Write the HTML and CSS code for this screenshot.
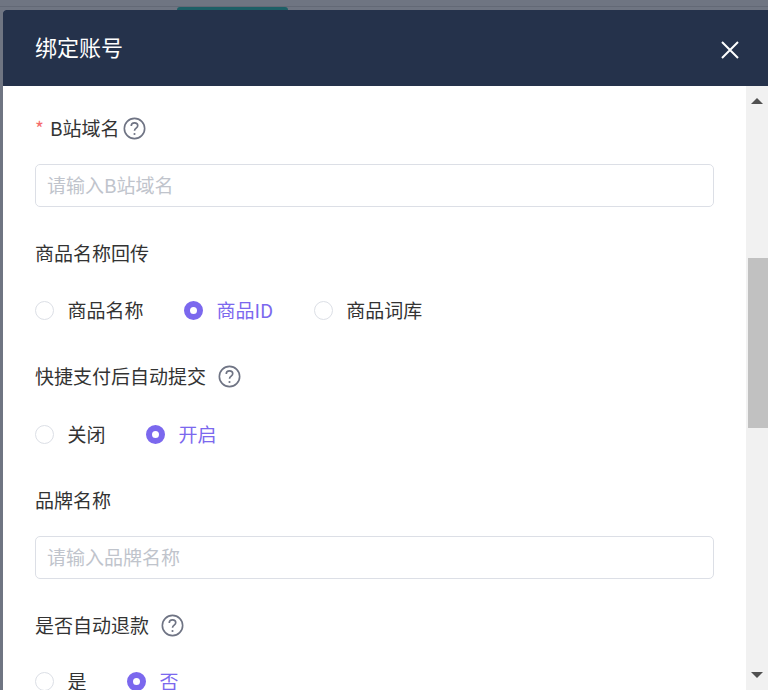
FILE: index.html
```html
<!DOCTYPE html>
<html lang="zh-CN">
<head>
<meta charset="utf-8">
<title>绑定账号</title>
<link rel="stylesheet" href="styles.css">
</head>
<body>
<div class="backdrop">
  <div class="page-line"></div>
  <div class="page-tab"></div>
  <section class="modal">
    <header class="modal-head">
      <h2 class="modal-title">绑定账号</h2>
      <svg class="close" width="20" height="20" viewBox="0 0 20 20"><path d="M2 2 18 18M18 2 2 18"/></svg>
    </header>
    <div class="modal-body">
      <form class="form">
        <div class="label-row"><span class="req">*</span><span>B站域名</span>
          <svg class="help help-tight" viewBox="0 0 24 24"><circle cx="12" cy="12" r="10.6"/><path d="M8.6 9.3c0-2 1.5-3.2 3.4-3.2s3.4 1.2 3.4 2.9c0 2.500-3.400 2.600-3.400 5.300"/><circle class="dot" cx="12" cy="17.700" r="1.100"/></svg>
        </div>
        <div class="input">请输入B站域名</div>

        <div class="label-row"><span>商品名称回传</span></div>
        <div class="radios">
          <span class="radio"><i class="dot-off"></i>商品名称</span>
          <span class="radio on"><i class="dot-on"></i>商品ID</span>
          <span class="radio"><i class="dot-off"></i>商品词库</span>
        </div>

        <div class="label-row label-wide"><span>快捷支付后自动提交</span>
          <svg class="help" viewBox="0 0 24 24"><circle cx="12" cy="12" r="10.6"/><path d="M8.6 9.3c0-2 1.5-3.2 3.4-3.2s3.4 1.2 3.4 2.9c0 2.500-3.400 2.600-3.400 5.300"/><circle class="dot" cx="12" cy="17.700" r="1.100"/></svg>
        </div>
        <div class="radios">
          <span class="radio"><i class="dot-off"></i>关闭</span>
          <span class="radio on"><i class="dot-on"></i>开启</span>
        </div>

        <div class="label-row"><span>品牌名称</span></div>
        <div class="input">请输入品牌名称</div>

        <div class="label-row label-narrow"><span>是否自动退款</span>
          <svg class="help" viewBox="0 0 24 24"><circle cx="12" cy="12" r="10.6"/><path d="M8.6 9.3c0-2 1.5-3.2 3.4-3.2s3.4 1.2 3.4 2.9c0 2.500-3.400 2.600-3.400 5.300"/><circle class="dot" cx="12" cy="17.700" r="1.100"/></svg>
        </div>
        <div class="radios">
          <span class="radio"><i class="dot-off"></i>是</span>
          <span class="radio on"><i class="dot-on"></i>否</span>
        </div>
      </form>
      <div class="scrollbar">
        <svg class="arrow" width="22" height="24" viewBox="0 0 22 24"><path d="M5 18 11 12 17 18Z"/></svg>
        <div class="track"><div class="thumb"></div></div>
        <svg class="arrow" width="22" height="24" viewBox="0 0 22 24"><path d="M5 6 11 12 17 6Z"/></svg>
      </div>
    </div>
  </section>
</div>
</body>
</html>
```
FILE: styles.css
```css
* { box-sizing: border-box; }
html, body { margin: 0; height: 100%; overflow: hidden; }
body { font-family: "Noto Sans CJK SC", "Noto Sans", sans-serif; color: #333; }
.backdrop {
  position: relative;
  height: 690px;
  background: #6f7582;
  padding: 10px 0 0 3px;
}
.page-line {
  position: absolute;
  left: 0; right: 0; top: 6px;
  height: 1px;
  background: #636976;
}
.page-tab {
  position: absolute;
  left: 177px; top: 7px;
  width: 111px; height: 3px;
  background: #1d5f66;
  border-radius: 3px 3px 0 0;
}
.modal {
  position: relative;
  height: 680px;
  display: flex;
  flex-direction: column;
  background: #fff;
  border-radius: 3px 0 0 0;
  overflow: hidden;
}
.modal-head {
  flex: none;
  height: 76px;
  background: #25324b;
  display: flex;
  align-items: center;
  justify-content: space-between;
  padding: 0 28px 0 32px;
}
.modal-title { margin: 0; font-size: 22px; font-weight: 400; color: #fff; line-height: 72px; height: 76px; }
.close { fill: none; stroke: #fff; stroke-width: 2; margin-top: 4px; }
.modal-body { flex: 1; min-height: 0; display: flex; overflow: hidden; }
.form { flex: 1; min-width: 0; padding: 23px 32px 0 32px; overflow: hidden; font-size: 19px; }
.label-row {
  height: 38px;
  display: flex;
  align-items: center;
  line-height: 38px;
  color: #333;
  margin-bottom: 17px;
}
.label-wide { margin-bottom: 18px; }
.label-narrow { margin-bottom: 16px; }
.req { color: #f56c6c; width: 15px; font-size: 19px; }
.help { width: 23px; height: 23px; margin-left: 12px; fill: none; stroke: #6f7484; stroke-width: 1.700; flex: none; }
.help-tight { margin-left: 4px; }
.help .dot { fill: #6f7484; stroke: none; }
.input {
  height: 43px;
  border: 1px solid #dcdfe6;
  border-radius: 5px;
  padding: 0 11px;
  line-height: 39px;
  color: #c0c4cc;
  margin-bottom: 27px;
}
.radios { display: flex; gap: 40.500px; height: 43px; align-items: flex-start; margin-bottom: 25px; color: #333; }
.radio { display: flex; align-items: center; gap: 13.500px; line-height: 41px; }
.radio.on { color: #7b68ee; }
.dot-off, .dot-on { width: 19px; height: 19px; border-radius: 50%; flex: none; margin-top: 2px; }
.dot-off { border: 1px solid #dcdfe6; background: #fff; }
.dot-on { border: 6.500px solid #7b68ee; background: #fff; }
.scrollbar { flex: none; width: 22px; display: flex; flex-direction: column; background: #f1f1f1; }
.arrow { flex: none; fill: #505050; display: block; }
.track { flex: 1; padding: 148px 0 0 2px; }
.thumb { height: 170px; background: #c1c1c1; }
```
